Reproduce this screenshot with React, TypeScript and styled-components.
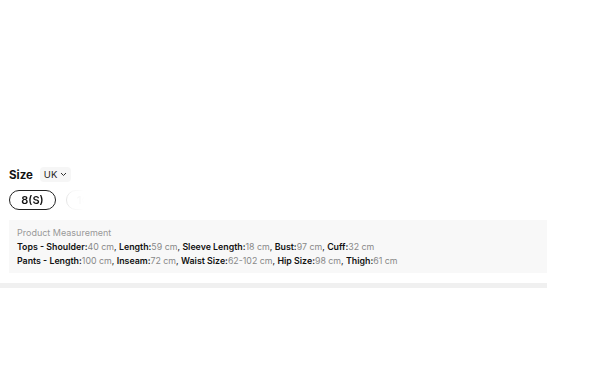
import styled, { createGlobalStyle } from "styled-components";

const GlobalStyle = createGlobalStyle`
  body {
    margin: 0;
    background: #fff;
    font-family: Inter, "Liberation Sans", sans-serif;
    color: #111;
  }
`;

const tops = [
  ["Shoulder", "40 cm"],
  ["Length", "59 cm"],
  ["Sleeve Length", "18 cm"],
  ["Bust", "97 cm"],
  ["Cuff", "32 cm"],
];

const pants = [
  ["Length", "100 cm"],
  ["Inseam", "72 cm"],
  ["Waist Size", "62-102 cm"],
  ["Hip Size", "98 cm"],
  ["Thigh", "61 cm"],
];

function MeasureLine({ label, items }: { label: string; items: string[][] }) {
  return (
    <Line>
      <b>{label} - </b>
      {items.map(([k, v], i) => (
        <span key={k}>
          <b>{k}:</b>
          <Val>{v}</Val>
          {i < items.length - 1 ? ", " : ""}
        </span>
      ))}
    </Line>
  );
}

export default function App() {
  return (
    <Page>
      <GlobalStyle />
      <Hero />
      <SizeHeader>
        <Title>Size</Title>
        <UnitSelect>
          UK
          <svg width="7" height="5" viewBox="0 0 7 5">
            <path d="M1 1l2.5 2.5L6 1" fill="none" stroke="#333" strokeWidth="1" />
          </svg>
        </UnitSelect>
      </SizeHeader>
      <PillRow>
        <Pill $active>8(S)</Pill>
        <Pill>10(M)</Pill>
        <Pill>12(L)</Pill>
      </PillRow>
      <MeasureBox>
        <MeasureTitle>Product Measurement</MeasureTitle>
        <MeasureLine label="Tops" items={tops} />
        <MeasureLine label="Pants" items={pants} />
      </MeasureBox>
      <Divider />
    </Page>
  );
}

const Page = styled.div`
  width: 600px;
  height: 375px;
  overflow: hidden;
`;

const Hero = styled.div`
  height: 166px;
`;

const SizeHeader = styled.div`
  display: flex;
  align-items: center;
  gap: 7px;
  padding-left: 9px;
  height: 17px;
`;

const Title = styled.span`
  font-size: 11.5px;
  font-weight: 700;
`;

const UnitSelect = styled.span`
  display: inline-flex;
  align-items: center;
  gap: 3px;
  height: 15px;
  padding: 0 4px;
  border-radius: 4px;
  background: #f6f6f6;
  font-size: 9.5px;
  color: #222;
`;

const PillRow = styled.div`
  display: flex;
  gap: 10px;
  padding: 7px 0 0 9px;
  height: 20px;
  mask-image: linear-gradient(to right, #000 64px, rgba(0, 0, 0, 0.25) 72px, transparent 84px);
`;

const Pill = styled.span<{ $active?: boolean }>`
  display: inline-flex;
  align-items: center;
  justify-content: center;
  box-sizing: border-box;
  height: 20px;
  padding: 0 10px;
  min-width: 47px;
  border-radius: 10px;
  border: 1px solid ${(p) => (p.$active ? "#222" : "#ddd")};
  font-size: 11px;
  font-weight: 600;
  color: ${(p) => (p.$active ? "#111" : "#bbb")};
`;

const MeasureBox = styled.div`
  margin: 10px 0 0 9px;
  width: 538px;
  box-sizing: border-box;
  padding: 6px 8px 5px;
  background: #f8f8f8;
`;

const MeasureTitle = styled.div`
  font-size: 9px;
  line-height: 14px;
  color: #999;
`;

const Line = styled.div`
  font-size: 8.8px;
  line-height: 14px;
  color: #111;
  white-space: nowrap;

  b {
    font-weight: 600;
  }
`;

const Val = styled.span`
  color: #888;
`;

const Divider = styled.div`
  margin-top: 10px;
  width: 547px;
  height: 5px;
  background: #f0f0f0;
`;
